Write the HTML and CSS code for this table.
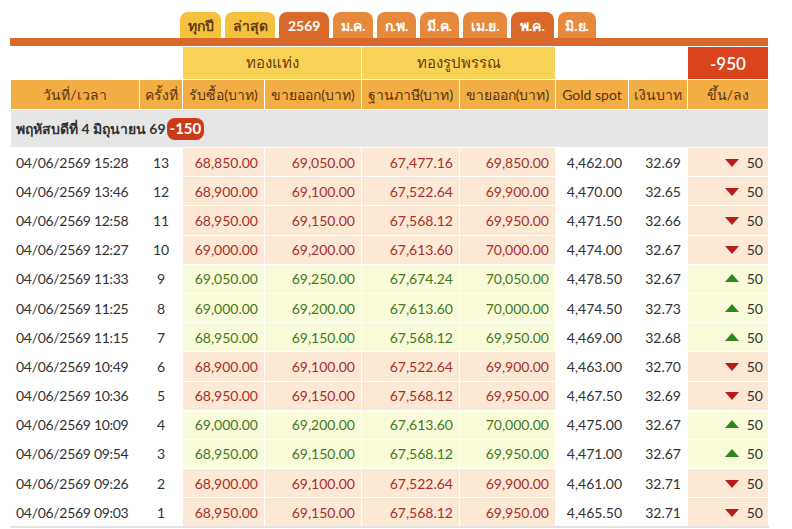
FILE: index.html
```html
<!DOCTYPE html>
<html lang="th">
<head>
<meta charset="utf-8">
<link rel="stylesheet" href="styles.css">
</head>
<body>
<div class="wrap">
  <div class="tabs">
    <span class="tab tab-y">ทุกปี</span>
    <span class="tab tab-y">ล่าสุด</span>
    <span class="tab tab-dark">2569</span>
    <span class="tab tab-o">ม.ค.</span>
    <span class="tab tab-o">ก.พ.</span>
    <span class="tab tab-o">มี.ค.</span>
    <span class="tab tab-o">เม.ย.</span>
    <span class="tab tab-dark">พ.ค.</span>
    <span class="tab tab-o">มิ.ย.</span>
  </div>
  <div class="bar"></div>
  <table class="grid">
    <colgroup>
      <col class="c1"><col class="c2"><col class="c3"><col class="c4"><col class="c5"><col class="c6"><col class="c7"><col class="c8"><col class="c9">
    </colgroup>
    <thead>
      <tr class="h1">
        <th colspan="2" class="blank"></th>
        <th colspan="2" class="grp">ทองแท่ง</th>
        <th colspan="2" class="grp">ทองรูปพรรณ</th>
        <th colspan="2" class="blank"></th>
        <th class="total">-950</th>
      </tr>
      <tr class="h2">
        <th>วันที่/เวลา</th><th>ครั้งที่</th><th>รับซื้อ(บาท)</th><th>ขายออก(บาท)</th><th>ฐานภาษี(บาท)</th><th>ขายออก(บาท)</th><th>Gold spot</th><th>เงินบาท</th><th>ขึ้น/ลง</th>
      </tr>
    </thead>
    <tbody>
      <tr class="day"><td colspan="9">พฤหัสบดีที่ 4 มิถุนายน 69<span class="badge">-150</span></td></tr>
      <tr class="dn"><td class="dt">04/06/2569 15:28</td><td class="no">13</td><td>68,850.00</td><td>69,050.00</td><td>67,477.16</td><td>69,850.00</td><td class="w">4,462.00</td><td class="w">32.69</td><td class="ch"><i class="tri"></i>50</td></tr>
      <tr class="dn"><td class="dt">04/06/2569 13:46</td><td class="no">12</td><td>68,900.00</td><td>69,100.00</td><td>67,522.64</td><td>69,900.00</td><td class="w">4,470.00</td><td class="w">32.65</td><td class="ch"><i class="tri"></i>50</td></tr>
      <tr class="dn"><td class="dt">04/06/2569 12:58</td><td class="no">11</td><td>68,950.00</td><td>69,150.00</td><td>67,568.12</td><td>69,950.00</td><td class="w">4,471.50</td><td class="w">32.66</td><td class="ch"><i class="tri"></i>50</td></tr>
      <tr class="dn"><td class="dt">04/06/2569 12:27</td><td class="no">10</td><td>69,000.00</td><td>69,200.00</td><td>67,613.60</td><td>70,000.00</td><td class="w">4,474.00</td><td class="w">32.67</td><td class="ch"><i class="tri"></i>50</td></tr>
      <tr class="up"><td class="dt">04/06/2569 11:33</td><td class="no">9</td><td>69,050.00</td><td>69,250.00</td><td>67,674.24</td><td>70,050.00</td><td class="w">4,478.50</td><td class="w">32.67</td><td class="ch"><i class="tri"></i>50</td></tr>
      <tr class="up"><td class="dt">04/06/2569 11:25</td><td class="no">8</td><td>69,000.00</td><td>69,200.00</td><td>67,613.60</td><td>70,000.00</td><td class="w">4,474.50</td><td class="w">32.73</td><td class="ch"><i class="tri"></i>50</td></tr>
      <tr class="up"><td class="dt">04/06/2569 11:15</td><td class="no">7</td><td>68,950.00</td><td>69,150.00</td><td>67,568.12</td><td>69,950.00</td><td class="w">4,469.00</td><td class="w">32.68</td><td class="ch"><i class="tri"></i>50</td></tr>
      <tr class="dn"><td class="dt">04/06/2569 10:49</td><td class="no">6</td><td>68,900.00</td><td>69,100.00</td><td>67,522.64</td><td>69,900.00</td><td class="w">4,463.00</td><td class="w">32.70</td><td class="ch"><i class="tri"></i>50</td></tr>
      <tr class="dn"><td class="dt">04/06/2569 10:36</td><td class="no">5</td><td>68,950.00</td><td>69,150.00</td><td>67,568.12</td><td>69,950.00</td><td class="w">4,467.50</td><td class="w">32.69</td><td class="ch"><i class="tri"></i>50</td></tr>
      <tr class="up"><td class="dt">04/06/2569 10:09</td><td class="no">4</td><td>69,000.00</td><td>69,200.00</td><td>67,613.60</td><td>70,000.00</td><td class="w">4,475.00</td><td class="w">32.67</td><td class="ch"><i class="tri"></i>50</td></tr>
      <tr class="up"><td class="dt">04/06/2569 09:54</td><td class="no">3</td><td>68,950.00</td><td>69,150.00</td><td>67,568.12</td><td>69,950.00</td><td class="w">4,471.00</td><td class="w">32.67</td><td class="ch"><i class="tri"></i>50</td></tr>
      <tr class="dn"><td class="dt">04/06/2569 09:26</td><td class="no">2</td><td>68,900.00</td><td>69,100.00</td><td>67,522.64</td><td>69,900.00</td><td class="w">4,461.00</td><td class="w">32.71</td><td class="ch"><i class="tri"></i>50</td></tr>
      <tr class="dn last"><td class="dt">04/06/2569 09:03</td><td class="no">1</td><td>68,950.00</td><td>69,150.00</td><td>67,568.12</td><td>69,950.00</td><td class="w">4,465.50</td><td class="w">32.71</td><td class="ch"><i class="tri"></i>50</td></tr>
    </tbody>
  </table>
</div>
</body>
</html>
```

FILE: styles.css
```css
* { box-sizing: border-box; }
html, body { margin: 0; padding: 0; background: #fff; }
body {
  font-family: Lato, "Noto Sans", "DejaVu Sans", sans-serif;
  font-size: 14px;
  color: #333;
}
.wrap { padding: 12px 24px 0 10px; width: 792px; }

.tabs {
  display: flex;
  gap: 4px;
  padding-left: 170px;
  height: 26px;
}
.tab {
  height: 26px;
  padding: 0 7.5px;
  border-radius: 8px 8px 0 0;
  font-size: 14px;
  font-weight: 700;
  line-height: 27px;
  color: #fff;
  white-space: nowrap;
}
.tab-y { background: #f4c23e; color: #6a3b0c; }
.tab-dark { background: #d9692a; padding: 0 9px; }
.tab-o { background: #e7893d; }

.bar { height: 8px; background: #d9692a; }

.grid {
  width: 758px;
  border-collapse: collapse;
  table-layout: fixed;
}
.c1 { width: 129px; } .c2 { width: 43px; } .c3 { width: 82px; }
.c4 { width: 97px; } .c5 { width: 98px; } .c6 { width: 96px; }
.c7 { width: 73px; } .c8 { width: 59px; } .c9 { width: 81px; }

th {
  font-weight: 400;
  border: 1px solid #fff;
  padding: 0;
  text-align: center;
}
.h1 th { height: 33px; font-size: 15px; }
.h1 .blank { background: #fff; }
.h1 .grp { background: #f8d255; color: #6a3b0c; }
.h1 .total { background: #d9431e; color: #fff; font-size: 17px; font-weight: 600; }
.h2 th { height: 30px; background: #f2ad45; color: #5a3410; font-size: 14px; }

td {
  height: 29.2px;
  padding: 0 6px 0 0;
  text-align: right;
  border: 1px solid #fff;
  white-space: nowrap;
}
.day td {
  background: #e6e6e6;
  height: 38px;
  padding: 0 0 0 5px;
  text-align: left;
  font-weight: 700;
  font-size: 14px;
  color: #333;
  border-bottom: 1px solid #fff;
}
.badge {
  display: inline-block;
  background: #c93c17;
  color: #fff;
  font-weight: 700;
  padding: 1px 3px 2px;
  border-radius: 8px;
  margin-left: 1px;
  line-height: 19px;
  font-size: 15px;
}

td.dt { text-align: left; padding-left: 5px; background: #fff; color: #333; letter-spacing: -0.3px; }
td.no { text-align: center; padding: 0; background: #fff; color: #333; }
td.w { background: #fff; color: #333; }
.dn td { background: #fbe8d5; color: #a8302a; }
.up td { background: #fafbda; color: #3f7a1c; }
.dn td.dt, .dn td.no, .up td.dt, .up td.no, .dn td.w, .up td.w { background: #fff; color: #333; }
.dn td.ch, .up td.ch { color: #333; padding-right: 5px; }
.last td { border-bottom: 2px solid #e3e3e3; }

.tri {
  display: inline-block;
  width: 0; height: 0;
  border-left: 7px solid transparent;
  border-right: 7px solid transparent;
  margin-right: 8px;
  vertical-align: 1px;
}
.dn .tri { border-top: 8px solid #b91c1c; }
.up .tri { border-bottom: 8px solid #2e861c; vertical-align: 2px; }
```
